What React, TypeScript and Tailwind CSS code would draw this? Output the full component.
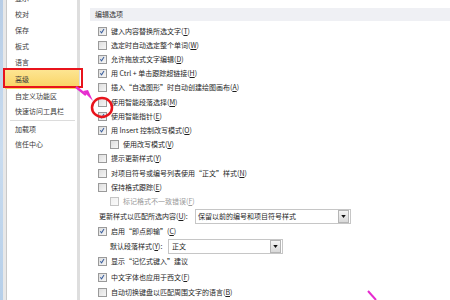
import React from 'react';

type Row = {
  label: string;
  accel?: string;
  checked?: boolean;
  indent?: boolean;
  disabled?: boolean;
  h: string;
};

const topRows: Row[] = [
  { label: '键入内容替换所选文字', accel: 'T', checked: true, h: 'h-[14.2px]' },
  { label: '选定时自动选定整个单词', accel: 'W', h: 'h-[14.2px]' },
  { label: '允许拖放式文字编辑', accel: 'D', checked: true, h: 'h-[14.2px]' },
  { label: '用 Ctrl + 单击跟踪超链接', accel: 'H', checked: true, h: 'h-[14.2px]' },
  { label: '插入“自选图形”时自动创建绘图画布', accel: 'A', h: 'h-[14.2px]' },
  { label: '使用智能段落选择', accel: 'M', h: 'h-[14.2px]' },
  { label: '使用智能指针', accel: 'E', checked: true, h: 'h-[14.2px]' },
  { label: '用 Insert 控制改写模式', accel: 'O', checked: true, h: 'h-[14.2px]' },
  { label: '使用改写模式', accel: 'V', indent: true, h: 'h-[14.2px]' },
  { label: '提示更新样式', accel: 'Y', h: 'h-[14.2px]' },
  { label: '对项目符号或编号列表使用“正文”样式', accel: 'N', h: 'h-[14.2px]' },
  { label: '保持格式跟踪', accel: 'E', h: 'h-[14.2px]' },
  { label: '标记格式不一致错误', accel: 'F', indent: true, disabled: true, h: 'h-[14.2px]' },
];

const sideItems = [
  { label: '显示', h: 'h-[16px]' },
  { label: '校对', h: 'h-[16px]' },
  { label: '保存', h: 'h-[16px]' },
  { label: '板式', h: 'h-[16px]' },
  { label: '语言', h: 'h-[16px]' },
];

function CheckBox({ checked, disabled }: { checked?: boolean; disabled?: boolean }) {
  return (
    <span
      className={
        'relative w-[9px] h-[9px] shrink-0 border bg-gradient-to-br ' +
        (disabled
          ? 'border-[#c4c4c4] from-[#f0f0f0] to-[#fafafa]'
          : 'border-[#9a9a9a] from-[#dedede] to-[#f6f6f6]')
      }
    >
      {checked && (
        <svg viewBox="0 0 9 9" className="absolute inset-0 w-[7px] h-[7px]">
          <path d="M1.5 4.2 L3.3 6.2 L6.4 1.2" fill="none" stroke="#3a5f9e" strokeWidth="1.3" />
        </svg>
      )}
    </span>
  );
}

function Label({ label, accel }: { label: string; accel?: string }) {
  return (
    <span className="whitespace-nowrap">
      {label}
      {accel && (
        <>
          (<u>{accel}</u>)
        </>
      )}
    </span>
  );
}

function CheckRow({ row }: { row: Row }) {
  return (
    <div
      className={
        'flex items-center gap-[4px] ' +
        row.h +
        (row.indent ? ' pl-[12px]' : '') +
        (row.disabled ? ' text-[#9a9a9a]' : '')
      }
    >
      <CheckBox checked={row.checked} disabled={row.disabled} />
      <Label label={row.label} accel={row.accel} />
    </div>
  );
}

function DropButton() {
  return (
    <span className="flex items-center justify-center w-[11px] h-[13px] border border-[#b5b5b5] bg-gradient-to-b from-[#f4f4f4] to-[#d9d9d9]">
      <svg viewBox="0 0 6 4" className="w-[5px] h-[3px]">
        <path d="M0 0 H6 L3 4 Z" fill="#111" />
      </svg>
    </span>
  );
}

export default function App() {
  return (
    <div
      className="relative w-[450px] h-[300px] overflow-hidden bg-white flex text-[7px] text-[#1e1e1e] leading-none"
      style={{ fontFamily: '"Noto Sans CJK SC", "Liberation Sans", sans-serif' }}
    >
      {/* window frame */}
      <div className="w-[3px] shrink-0 bg-gradient-to-b from-[#b7cde6] via-[#c9dcf0] to-[#b6cfe9]" />
      <div className="w-[4px] shrink-0 bg-[#e8e8e8] border-r border-[#c9c9c9]" />

      {/* sidebar */}
      <div className="w-[73px] shrink-0 border-r-[3px] border-[#dedede] text-[#3a3a3a]">
        <div className="mt-[-10px] flex flex-col">
          {sideItems.map((s) => (
            <div key={s.label} className={'flex items-center pl-[8px] ' + s.h}>
              {s.label}
            </div>
          ))}
          <div className="h-[19px] flex items-center pl-[8px] mx-[-2px] bg-gradient-to-b from-[#fde592] to-[#f9d25e]">
            <span className="pl-[2px]">高级</span>
          </div>
          <div className="h-[15px] flex items-center pl-[8px]">自定义功能区</div>
          <div className="h-[14px] flex items-center pl-[8px]">快速访问工具栏</div>
          <div className="h-[4px] flex items-center pl-[3px] pr-[2px]">
            <div className="h-px w-full bg-[#dcdcdc]" />
          </div>
          <div className="h-[14px] flex items-center pl-[8px]">加载项</div>
          <div className="h-[16px] flex items-center pl-[8px]">信任中心</div>
        </div>
      </div>

      {/* main */}
      <div className="flex-1 flex flex-col pl-[10px] pt-[8px]">
        <div className="h-[16px] bg-[#eff0f4] flex items-center pl-[5px] text-[#333]">编辑选项</div>
        <div className="flex flex-col pl-[8px] pt-[3px]">
          {topRows.map((r, i) => (
            <CheckRow key={i} row={r} />
          ))}

          <div className="h-[15.5px] flex items-center pl-[1px]">
            <span className="w-[96px] whitespace-nowrap">
              更新样式以匹配所选内容(<u>U</u>):
            </span>
            <div className="w-[156px] h-[15px] flex items-center border border-[#c6c6c6] pl-[2px] pr-px">
              <span className="flex-1 whitespace-nowrap">保留以前的编号和项目符号样式</span>
              <DropButton />
            </div>
          </div>

          <CheckRow row={{ label: '启用“即点即输”', accel: 'C', checked: true, h: 'h-[14.5px]' }} />

          <div className="h-[16px] flex items-center pl-[12px]">
            <span className="w-[58px] whitespace-nowrap">
              默认段落样式(<u>Y</u>):
            </span>
            <div className="w-[115px] h-[15px] flex items-center border border-[#c6c6c6] pl-[3px] pr-px">
              <span className="flex-1">正文</span>
              <DropButton />
            </div>
          </div>

          <CheckRow row={{ label: '显示“记忆式键入”建议', checked: true, h: 'h-[14.5px]' }} />
          <CheckRow row={{ label: '中文字体也应用于西文', accel: 'F', checked: true, h: 'h-[16px]' }} />
          <CheckRow row={{ label: '自动切换键盘以匹配周围文字的语言', accel: 'B', h: 'h-[15px]' }} />
        </div>
      </div>

      {/* annotations */}
      <div className="absolute left-[3px] top-[68px] w-[80px] h-[20px] border-[2.5px] border-[#e8141c]" />
      <svg className="absolute left-0 top-0 w-[450px] h-[300px] pointer-events-none" viewBox="0 0 450 300">
        <ellipse cx="102" cy="107.5" rx="10" ry="9.5" fill="none" stroke="#e8141c" strokeWidth="2.5" />
        <path d="M76 87 L86 95" stroke="#e62ccf" strokeWidth="2.5" />
        <path d="M83 91 L93 101 L88 90 Z" fill="#e62ccf" />
        <path d="M368 291 L376 300" stroke="#e62ccf" strokeWidth="2" />
      </svg>
    </div>
  );
}
